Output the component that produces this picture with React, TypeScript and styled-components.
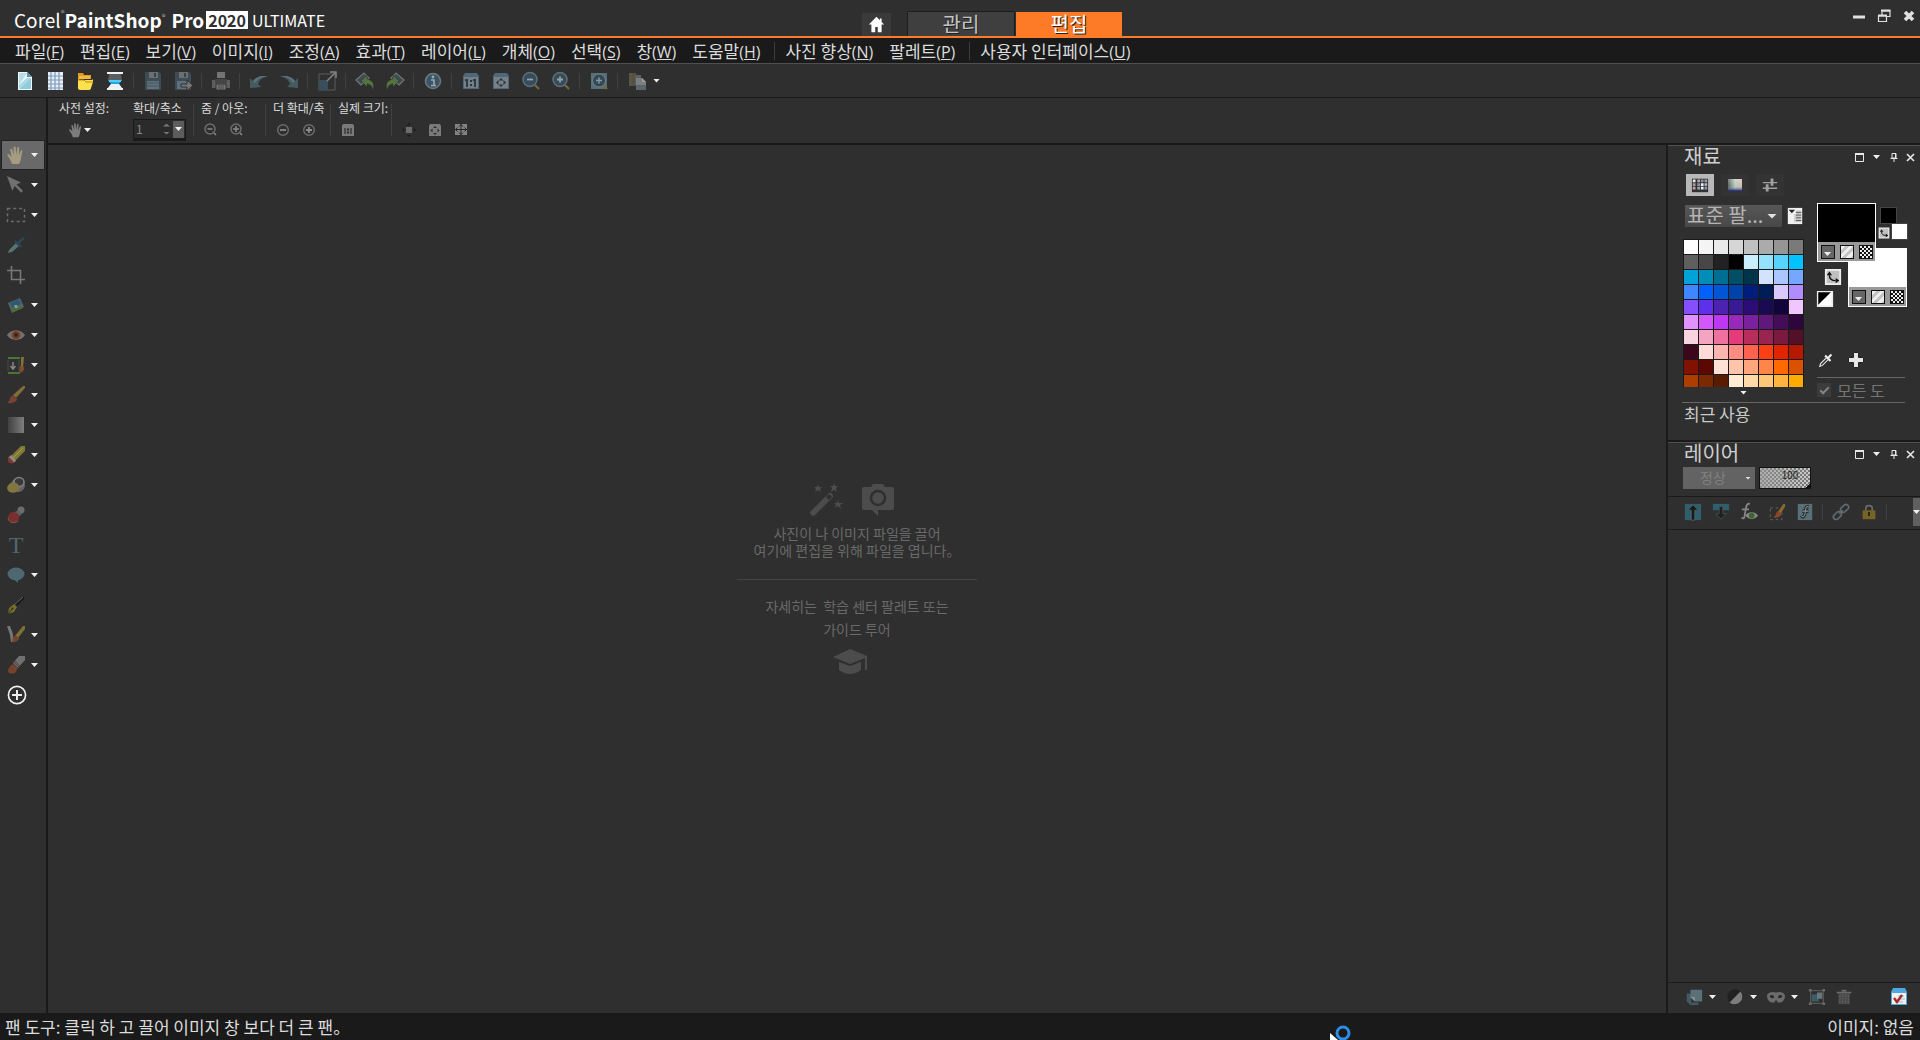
import React from "react";
import styled, { createGlobalStyle, css } from "styled-components";

const c = {
  bg: "#2f2f2f",
  dark: "#1a1a1a",
  edge: "#505050",
  orange: "#fd7a26",
  text: "#dcdcdc",
  dim: "#696969",
};

const ui = `"Noto Sans CJK KR", "Noto Sans", sans-serif`;

const GlobalStyle = createGlobalStyle`
  *, *::before, *::after { box-sizing: border-box; }
  body { margin: 0; background: ${c.bg}; color: ${c.text}; font: 17px/24px ${ui}; overflow: hidden; }
  button, input, select { font: inherit; color: inherit; margin: 0; padding: 0; border: 0; background: none; border-radius: 0; }
  h1, h2, p { margin: 0; font-weight: 400; }
`;

/* ---------- icons (20 x 20 grid) ---------- */

const icons: Record<string, React.ReactNode> = {
  newFile: (
    <>
      <path d="M3 1h9l5 5v13H3z" fill="#eef8fb" />
      <path d="M4 2h8l-8 12z" fill="#b5dfe9" />
      <path d="M4 18L16 7v11z" fill="#8fcbdc" />
      <path d="M4 14L12 7h4L4 18z" fill="#a8d8e4" />
      <path d="M12 1l5 5h-5z" fill="#5d93ad" />
    </>
  ),
  grid: (
    <>
      <path d="M3 1h15v18H3z" fill="#e9eef3" />
      <path d="M6 1v18M10 1v18M14 1v18M3 5h15M3 9h15M3 13h15M3 17h15" stroke="#7b9bbd" strokeWidth="1.2" />
    </>
  ),
  folder: (
    <>
      <path d="M3 2h5l1 2h7v4H3z" fill="#e39a21" />
      <path d="M3 8l2 1h12l1-1v3l-2 6c0 1-1 2-2 2H5c-1 0-2-1-2-2z" fill="#ffe14f" />
      <path d="M4 8V5h11v3" fill="#f5b83a" />
      <path d="M3 9h6l2 2h7" stroke="#b98a12" fill="none" />
    </>
  ),
  scanner: (
    <>
      <path d="M2 1h16v2H2zM2 17h16v2H2z" fill="#f2f2f2" />
      <path d="M4 3h12l1 7H3z" fill="#5b5e61" />
      <path d="M3 9h14l-3 4 3 4H3l3-4z" fill="#1fa5df" />
      <path d="M6 13h8l3 4H3z" fill="#e8f2f5" />
      <path d="M4 9h12v2H4z" fill="#58ccf5" />
    </>
  ),
  save: (
    <>
      <path d="M2 1h14l2 2v16H2z" fill="#42545f" />
      <path d="M6 1h9v6H6z" fill="#7b7f81" />
      <path d="M11 2h2v4h-2z" fill="#3a4a55" />
      <path d="M4 10h12v8H4z" fill="#6c8290" />
      <path d="M4 12h12M4 15h12" stroke="#4e6370" />
    </>
  ),
  saveAs: (
    <>
      <path d="M2 1h14l2 2v16H2z" fill="#42545f" />
      <path d="M6 1h9v6H6z" fill="#7b7f81" />
      <path d="M11 2h2v4h-2z" fill="#3a4a55" />
      <path d="M4 10h12v8H4z" fill="#6c8290" />
      <path d="M8 13h6v-4l6 5.500-6 5.500v-4H8z" fill="#8a8a8a" stroke="#2f2f2f" />
    </>
  ),
  print: (
    <>
      <path d="M6 1h8v6H6z" fill="#858585" />
      <path d="M1 9h18v8H1z" fill="#6a6a6a" />
      <path d="M4 8h12v4H4z" fill="#4b4b4b" />
      <path d="M5 13h10v6H5z" fill="#8a8a8a" stroke="#2f2f2f" />
      <path d="M7 15h6M7 17h6" stroke="#4b4b4b" />
    </>
  ),
  undo: (
    <>
      <path d="M1 17V7l3 3c4-5 10-6 15-4-5 0-8 2-10 7l3 3z" fill="#4a666c" />
      <path d="M4 10c4-5 10-6 15-4-6-1-10 1-13 6z" fill="#6b868c" />
    </>
  ),
  redo: (
    <>
      <path d="M19 17V7l-3 3C12 5 6 4 1 6c5 0 8 2 10 7l-3 3z" fill="#4a666c" />
      <path d="M16 10C12 5 6 4 1 6c6-1 10 1 13 6z" fill="#6b868c" />
    </>
  ),
  resize: (
    <>
      <path d="M2 3h16v16H2z" fill="none" stroke="#686868" />
      <path d="M2 9h9v10H2z" fill="#3b5766" />
      <path d="M10 10l8-8M13 1h6v6" stroke="#9a9a9a" strokeWidth="1.500" fill="none" />
    </>
  ),
  rotateLeft: (
    <>
      <path d="M1 9l8-7 5 5-8 7z" fill="#3d5260" stroke="#7f878b" strokeWidth="1.200" />
      <path d="M6 10l6-6v4c5 1 8 4 6 11-1-4-3-6-6-6v3z" fill="#5f8446" stroke="#2c3626" strokeWidth=".6" />
    </>
  ),
  rotateRight: (
    <>
      <path d="M19 9l-8-7-5 5 8 7z" fill="#3d5260" stroke="#7f878b" strokeWidth="1.200" />
      <path d="M14 10L8 4v4c-5 1-8 4-6 11 1-4 3-6 6-6v3z" fill="#5f8446" stroke="#2c3626" strokeWidth=".6" />
    </>
  ),
  info: (
    <>
      <circle cx="10" cy="10" r="7.500" fill="#3c5f74" stroke="#7a8c94" strokeWidth="1.600" />
      <circle cx="10" cy="6" r="1.400" fill="#b9c4c9" />
      <path d="M8 9h3v5M8 14.500h5" stroke="#b9c4c9" strokeWidth="1.600" fill="none" />
    </>
  ),
  actual: (
    <>
      <path d="M4 2h12l2 3v13H2V5z" fill="#56758c" />
      <path d="M3 6h14v11H3z" fill="#8a939b" />
      <path d="M6 8v8M14 8v8M4 9.500l2-1M12 9.500l2-1" stroke="#24384d" strokeWidth="1.800" />
      <path d="M9 9h2v2H9zM9 13h2v2H9z" fill="#24384d" />
    </>
  ),
  fit: (
    <>
      <path d="M4 2h12l2 3v13H2V5z" fill="#56758c" />
      <path d="M3 6h14v11H3z" fill="#8a959c" />
      <path d="M10 7l2.500 2.500h-5zM10 16l2.500-2.500h-5zM5 11.500L7.500 9v5zM15 11.500L12.500 9v5z" fill="#24384d" />
    </>
  ),
  zoomOut: (
    <>
      <circle cx="9" cy="8.500" r="7" fill="#385466" stroke="#67808c" strokeWidth="1.500" />
      <path d="M6 8.500h6" stroke="#b0bcc2" strokeWidth="1.800" />
      <path d="M14 14l4 4" stroke="#8b7643" strokeWidth="2.200" />
    </>
  ),
  zoomIn: (
    <>
      <circle cx="9" cy="8.500" r="7" fill="#385466" stroke="#67808c" strokeWidth="1.500" />
      <path d="M6 8.500h6M9 5.500v6" stroke="#b0bcc2" strokeWidth="1.800" />
      <path d="M14 14l4 4" stroke="#8b7643" strokeWidth="2.200" />
    </>
  ),
  zoomPage: (
    <>
      <path d="M2 2h16v16H2z" fill="#62808c" />
      <circle cx="10" cy="9.500" r="6.500" fill="#35505f" stroke="#84959c" />
      <path d="M7 9.500h6M10 6.500v6" stroke="#9fb0b8" strokeWidth="1.500" />
      <path d="M14 14l4 4" stroke="#8b7643" strokeWidth="2" />
    </>
  ),
  copy: (
    <>
      <path d="M2 2h7v13H2z" fill="#5c5a4a" />
      <path d="M2 2h3v13H2z" fill="#67604a" />
      <path d="M8 4h6v10H8z" fill="#6a6e70" />
      <path d="M9 7h6l4 4v8H9z" fill="#8c9496" />
      <path d="M9 14h10v5H9z" fill="#66757c" />
      <path d="M15 7l4 4h-4z" fill="#b6b6b6" />
    </>
  ),
  hand: (
    <path
      d="M6 19L4.500 15 1.500 10.500c-.7-1.400 1-2 1.800-1L5.500 12 4.300 5c-.2-1.500 1.500-1.800 1.900-.4L7.800 10 7.600 2.600c0-1.500 1.900-1.500 2 0L10.300 9.700l1-6.700c.3-1.400 2-1.100 1.900.3l-.4 7.200 1.700-4.600c.5-1.300 2-.8 1.700.6L15 13c-.2 2.500-.8 4-2 6z"
      fill="currentColor"
    />
  ),
  pointer: <path d="M1 1l14 6.500-4.500 2 6.500 6.300-1.800 1.900-6.500-6.600-2.400 4.700z" fill="#707070" />,
  marquee: <path d="M1.500 3.500h17v13h-17z" fill="none" stroke="#6c6c6c" strokeWidth="1.500" strokeDasharray="3 2.800" />,
  dropper: (
    <>
      <path d="M2 18l1-3 7-7 3 3-7 6z" fill="#587374" />
      <path d="M9 6l6 6M12 9l4-5" stroke="#2c4856" strokeWidth="2.400" />
      <path d="M16 3l2 1" stroke="#2c4856" strokeWidth="2.500" />
    </>
  ),
  crop: <path d="M5.500 1v13.500H19M1 5.500h13.500V19" fill="none" stroke="#787878" strokeWidth="1.600" />,
  straighten: (
    <>
      <path d="M2 8l12-5 4 9-12 6z" fill="#56666c" />
      <path d="M4 8l9-4 2 5-9 4z" fill="#2e5877" />
      <path d="M5 13l4-1 6-1 2 2-10 4z" fill="#4b6e35" />
      <path d="M8 10h3l1 3H9z" fill="#8d9696" />
    </>
  ),
  eye: (
    <>
      <path d="M1 10c4-6.500 14-6.500 18 0-4 6.500-14 6.500-18 0z" fill="#757170" />
      <circle cx="10" cy="10" r="4.400" fill="#77412d" />
      <circle cx="10" cy="10" r="2" fill="#3d211a" />
    </>
  ),
  clean: (
    <>
      <path d="M2 3h12M2 18h12" stroke="#487733" strokeWidth="2" />
      <path d="M13 5v11M2 5v11" stroke="#4a4a4a" />
      <path d="M7 7v6M4.500 11l2.500 3 2.500-3" stroke="#868686" strokeWidth="1.500" fill="none" />
      <path d="M15 2h3l-1 10h-2z" fill="#857232" />
      <path d="M14 11l4 1c1 3-2 6-5 6 1-2 0-5 1-7z" fill="#814c33" />
    </>
  ),
  brush: (
    <>
      <path d="M17 1h2v2l-9 10-3-3z" fill="#806c36" />
      <path d="M7 10l4 4c0 3-6 5-10 4 3-1 2-6 6-8z" fill="#774331" />
    </>
  ),
  gradient: (
    <>
      <defs>
        <linearGradient id="toolGradient">
          <stop offset="0" stopColor="#424242" />
          <stop offset="1" stopColor="#7d7d7d" />
        </linearGradient>
      </defs>
      <path d="M2 2h16v16H2z" fill="url(#toolGradient)" />
    </>
  ),
  eraser: (
    <>
      <path d="M15 1h4v5L9 16l-4-5z" fill="#817a36" />
      <path d="M17 3L7 13" stroke="#a39a4d" />
      <path d="M5 10l5 6-3 2-5-5z" fill="#8e8e8e" />
      <path d="M3 12l5 5c-2 3-7 1-6-3z" fill="#893434" />
    </>
  ),
  bucket: (
    <>
      <circle cx="12" cy="10" r="7" fill="#666" />
      <ellipse cx="13" cy="7" rx="5" ry="4.500" fill="#3a3a3a" stroke="#838383" strokeWidth="1.500" />
      <path d="M1 13c1-5 6-7 11-4l1 6c-3 4-11 4-12-2z" fill="#81763f" />
    </>
  ),
  clone: (
    <>
      <circle cx="15" cy="5" r="3.500" fill="#6d6d6d" />
      <path d="M12 5l4 4-6 5-4-5z" fill="#5e5e5e" />
      <circle cx="7.500" cy="12.500" r="5.500" fill="#792f2f" />
      <path d="M2 13c1 5 6 6 10 3" stroke="#8c5050" fill="none" />
    </>
  ),
  text: (
    <text x="10" y="18" textAnchor="middle" fill="#4f686b" fontFamily="Liberation Serif, serif" fontSize="24">
      T
    </text>
  ),
  speech: (
    <>
      <ellipse cx="10" cy="9" rx="8.500" ry="6.500" fill="#4c6870" />
      <path d="M8 14l4 4v-4z" fill="#4c6870" />
    </>
  ),
  pen: (
    <>
      <path d="M18 1v3l-7 7-3-2z" fill="#191919" />
      <path d="M17 2L8 10" stroke="#6b6b6b" />
      <path d="M8 9l3 3-3 5-6 2 1-6z" fill="#756f2a" />
      <path d="M2 19l4-5" stroke="#302e1a" />
      <circle cx="6.500" cy="13.500" r="1" fill="#302e1a" />
    </>
  ),
  warp: (
    <>
      <path d="M1 1h3l3 8v8H5l-1-7z" fill="#767676" />
      <path d="M17 1h2v3l-7 9-3-2z" fill="#806f35" />
      <path d="M8 11l5 1c1 3-3 6-7 5 1-2 0-4 2-6z" fill="#774331" />
    </>
  ),
  oil: (
    <>
      <path d="M13 1h6v4l-7 8-5-5z" fill="#707070" />
      <path d="M9 6l5 5M8 7l5 5" stroke="#474747" />
      <path d="M7 9l5 4-3 5c-3 1-7 1-7-2s2-5 5-7z" fill="#74422f" />
    </>
  ),
  addTool: (
    <>
      <circle cx="10" cy="10" r="7.800" fill="none" stroke="#f0f0f0" strokeWidth="1.500" />
      <path d="M10 5.500v9M5.500 10h9" stroke="#f0f0f0" strokeWidth="1.800" />
    </>
  ),
  minusLens: (
    <>
      <circle cx="9" cy="9" r="5" fill="none" stroke="#6d6d6d" strokeWidth="1.500" />
      <path d="M6.500 9h5M13 13l2 2" stroke="#8a8a8a" strokeWidth="1.500" />
    </>
  ),
  plusLens: (
    <>
      <circle cx="9" cy="9" r="5" fill="none" stroke="#6d6d6d" strokeWidth="1.500" />
      <path d="M6 9h6M9 6v6M13 13l2 2" stroke="#8a8a8a" strokeWidth="1.500" />
    </>
  ),
  minusCircle: (
    <>
      <circle cx="10" cy="10" r="5.300" fill="none" stroke="#6d6d6d" strokeWidth="1.400" />
      <path d="M7 10h6" stroke="#8a8a8a" strokeWidth="1.800" />
    </>
  ),
  plusCircle: (
    <>
      <circle cx="10" cy="10" r="5.300" fill="none" stroke="#6d6d6d" strokeWidth="1.400" />
      <path d="M7 10h6M10 7v6" stroke="#8a8a8a" strokeWidth="1.800" />
    </>
  ),
  oneToOne: (
    <>
      <path d="M5 4h10l1 2v10H4V6z" fill="#7a7a7a" />
      <path d="M7 8v6M13 8v6M9.500 9h1v1h-1zM9.500 12h1v1h-1z" stroke="#2c2c2c" strokeWidth="1.200" />
    </>
  ),
  moveView: (
    <>
      <path d="M7 7h6v6H7z" fill="#6c6c6c" />
      <path d="M10 3l2 2H8zM10 17l2-2H8zM3 10l2-2v4zM17 10l-2-2v4z" fill="#1a1a1a" />
    </>
  ),
  fitSmall: (
    <>
      <path d="M5 4h10l1 2v10H4V6z" fill="#7a7a7a" />
      <path d="M10 6l2 2H8zM10 15l2-2H8zM5.500 10.500l2-2v4zM14.500 10.500l-2-2v4z" fill="#2c2c2c" />
    </>
  ),
  fitScreen: (
    <>
      <path d="M4 4h12v11H4z" fill="#828282" />
      <path d="M10 4v11M4 9.500h12M8 6.500l2-2 2 2M8 12.500l2 2 2-2M6.500 7.500l-2 2 2 2M13.500 7.500l2 2-2 2" stroke="#242424" fill="none" />
    </>
  ),
  home: <path d="M10 1L1 10h3v9h4.500v-6h3v6H16v-9h3l-3-3V3h-2v2z" fill="#fff" />,
  swatchTab: (
    <>
      <path d="M1 3h18v15H1z" fill="#333" />
      <path d="M2 4h3v3H2zM11 8h3v3h-3zM11 12h3v3h-3z" fill="#eee" />
      <path d="M7 4h3v3H7zM2 12h3v3H2z" fill="#caa2a2" />
      <path d="M11 4h3v3h-3zM7 8h3v3H7zM15 12h3v3h-3z" fill="#8793b8" />
      <path d="M15 4h3v3h-3zM2 8h3v3H2zM7 12h3v3H7z" fill="#93a79b" />
      <path d="M15 8h3v3h-3z" fill="#b8b0c8" />
    </>
  ),
  rainbowTab: (
    <>
      <defs>
        <linearGradient id="hueAcross">
          <stop offset="0" stopColor="#2c2c2c" />
          <stop offset=".5" stopColor="#a9bfb0" />
          <stop offset="1" stopColor="#d8a79e" />
        </linearGradient>
        <linearGradient id="hueDown" x2="0" y2="1">
          <stop offset="0" stopColor="#fff" stopOpacity=".4" />
          <stop offset=".6" stopColor="#cfe8d4" stopOpacity=".3" />
          <stop offset="1" stopColor="#101c86" />
        </linearGradient>
      </defs>
      <path d="M3 4h14v12H3z" fill="url(#hueAcross)" />
      <path d="M3 4h14v12H3z" fill="url(#hueDown)" />
    </>
  ),
  sliderTab: (
    <>
      <path d="M1 7h18M1 14h18" stroke="#a0a0a0" strokeWidth="1.800" />
      <path d="M12.500 2v9M6.500 9v9" stroke="#a0a0a0" strokeWidth="3.500" />
    </>
  ),
  paletteMenu: (
    <>
      <path d="M2 1h16v18H2z" fill="#f0f0f0" />
      <path d="M3 3h7L6.500 7z" fill="#222" />
      <path d="M10 8v9" stroke="#aaa" />
      <path d="M11 4h6v13h-6z" fill="#c8c8c8" />
      <path d="M11 6h6M11 9h6M11 12h6M11 15h6" stroke="#555" />
    </>
  ),
  swap: (
    <>
      <path d="M2 2h16v16H2z" fill="#c0c0c0" stroke="#eee" strokeWidth="2" />
      <path d="M6 8c0 4 2 6 7 6" stroke="#111" strokeWidth="1.600" fill="none" />
      <path d="M6 4l3 4H3zM17 14l-4 3v-6z" fill="#111" />
    </>
  ),
  blackWhite: (
    <>
      <path d="M2 2h16v16H2z" fill="#fff" stroke="#eee" strokeWidth="2" />
      <path d="M2.500 2.500h14l-14 14z" fill="#000" />
    </>
  ),
  whiteDropper: (
    <>
      <path d="M3 17l1-3 7-7 2 2-7 7z" fill="#2a2a2a" stroke="#eee" strokeWidth="1.200" />
      <path d="M9 5l6 6M12 8l4-4" stroke="#eee" strokeWidth="2.400" />
    </>
  ),
  plus: <path d="M7.500 2.500h5v5h5v5h-5v5h-5v-5h-5v-5h5z" fill="#e6e6e6" stroke="#222" />,
  layerUp: (
    <>
      <path d="M1 1h18v18H1z" fill="#2f5f6c" />
      <path d="M10 2l6 6h-4v11H8V8H4z" fill="#191c1d" stroke="#5f696c" strokeWidth=".8" />
    </>
  ),
  layerDown: (
    <>
      <path d="M1 1h18v7H1z" fill="#2f5f6c" />
      <path d="M8 4h4v8h4l-6 6-6-6h4z" fill="#1d2021" stroke="#51585a" strokeWidth=".8" />
    </>
  ),
  effectEye: (
    <>
      <path d="M11 1C7 0 7 4 6 9l-1 6c0 2-2 3-3 1M2 7h8" stroke="#858585" strokeWidth="2" fill="none" />
      <path d="M6 14c3-5 11-5 14 0-3 5-11 5-14 0z" fill="#8a8a8a" />
      <circle cx="13" cy="14" r="3.200" fill="#3d662a" />
    </>
  ),
  maskBrush: (
    <>
      <path d="M2.500 5.500h13v13h-13z" fill="none" stroke="#686868" strokeDasharray="3 3" />
      <path d="M17 1h2v3l-5 8-3-2z" fill="#8a6a32" />
      <path d="M11 9l4 3c0 3-5 5-9 4 3-1 2-5 5-7z" fill="#8a452b" />
    </>
  ),
  style: (
    <>
      <path d="M2 1h16v18H2z" fill="#587077" />
      <path d="M14 4c-4-1-3 4-4 8s-3 4-4 2M7 9h7" stroke="#1c2224" strokeWidth="3.500" fill="none" />
      <path d="M14 4c-4-1-3 4-4 8s-3 4-4 2M7 9h7" stroke="#8a9496" strokeWidth="1.200" fill="none" />
    </>
  ),
  link: (
    <g fill="none" stroke="#5f6a6c" strokeWidth="1.800">
      <rect x="9" y="3" width="10" height="6" rx="3" transform="rotate(-42 14 6)" />
      <rect x="1" y="11" width="10" height="6" rx="3" transform="rotate(-42 6 14)" />
      <path d="M8 12l4-4" />
    </g>
  ),
  lock: (
    <>
      <path d="M6 9V5c0-4 8-4 8 0v4" fill="none" stroke="#6a6a6a" strokeWidth="2" />
      <path d="M2 8h16v11H2z" fill="#756423" />
      <path d="M9 10h2v5H9z" fill="#1d1a0e" />
    </>
  ),
  newLayer: (
    <>
      <path d="M2 6h5v10h8v3H6l-4-4z" fill="#3f5b65" />
      <path d="M6 2h13v13h-8l-5-5z" fill="#5a7076" />
      <path d="M6 10h5v5z" fill="#829296" />
    </>
  ),
  adjust: (
    <>
      <circle cx="10" cy="10" r="8.500" fill="#212121" />
      <path d="M16 4a8.500 8.500 0 0 1-12 12z" fill="#7d7d7d" />
    </>
  ),
  mask: (
    <>
      <path d="M0 8c2-4 6-4 10-3 4-1 8-1 10 3 0 6-4 9-8 8l-2-3-2 3c-4 1-8-2-8-8z" fill="#6c6c6c" />
      <path d="M3 9c2-2 4-1 5 1-1 2-4 2-5-1zM17 9c-2-2-4-1-5 1 1 2 4 2 5-1z" fill="#2a2a2a" />
    </>
  ),
  group: (
    <>
      <path d="M3 3h14v14H3z" fill="none" stroke="#666" />
      <path d="M4 7h8v8H4z" fill="#3f5b65" />
      <path d="M10 5h6v7h-6z" fill="#69777b" />
      <path d="M1 1h3v3H1zM16 1h3v3h-3zM1 16h3v3H1zM16 16h3v3h-3z" fill="#696969" />
    </>
  ),
  trash: (
    <>
      <path d="M3 6h14v13H3z" fill="#484848" />
      <path d="M1 4.500h18M7 2h6" stroke="#6a6a6a" strokeWidth="2" />
      <path d="M5 7v12M8.500 7v12M12 7v12M15.500 7v12" stroke="#6a6a6a" strokeDasharray="1 1" strokeWidth="1.600" />
    </>
  ),
  quickCheck: (
    <>
      <path d="M4 1h12l2 4v13H2V5z" fill="#4fa7e0" />
      <path d="M3 6h14v11H3z" fill="#f2f2f2" />
      <path d="M9 9h6M11 12h5M6 15h8" stroke="#9fb6c8" />
      <path d="M5 11l3 4 5-7" stroke="#a82828" strokeWidth="2.400" fill="none" />
    </>
  ),
};

const Svg = styled.svg<{ $size: number }>`
  display: block;
  flex: none;
  overflow: visible;
  width: ${(p) => p.$size}px;
  height: ${(p) => p.$size}px;
`;

const Icon = ({ name, size = 20 }: { name: string; size?: number }) => (
  <Svg $size={size} viewBox="0 0 20 20" aria-hidden="true">
    {icons[name]}
  </Svg>
);

const Caret = styled.span`
  flex: none;
  width: 7px;
  height: 4px;
  background: #f0f0f0;
  clip-path: polygon(0 0, 100% 0, 50% 100%);
`;

const dots = css`
  background-image: radial-gradient(circle, #6a6a6a 35%, transparent 40%);
  background-size: 2px 2px;
`;

/* ---------- frame ---------- */

const Window = styled.div`
  display: flex;
  flex-direction: column;
  height: 100vh;
`;

const TitleBar = styled.header`
  display: grid;
  grid-template-columns: 54fr auto 50fr;
  height: 38px;
  flex: none;
  border-bottom: 2px solid ${c.orange};
`;

const Brand = styled.h1`
  display: flex;
  align-items: center;
  padding: 4px 0 0 14px;
  font-size: 19px;
  line-height: 24px;
  color: #fff;
`;
const BrandBold = styled.span<{ $gap: number }>`
  font-weight: 700;
  margin-right: ${(p) => p.$gap}px;
`;
const Mark = styled.span`
  align-self: flex-start;
  padding-top: 5px;
  font-size: 8px;
  line-height: 8px;
  font-weight: 400;
  vertical-align: 8px;
  color: #aaa;
`;
const Year = styled.span`
  background: #fff;
  color: ${c.bg};
  font-size: 16px;
  line-height: 18px;
  font-weight: 700;
  padding: 0 2px;
  margin-right: 4px;
`;
const Edition = styled.span`
  font-size: 16px;
`;

const Tabs = styled.nav`
  display: flex;
  align-items: flex-end;
  gap: 2px;
`;
const HomeButton = styled.button`
  display: grid;
  place-items: center;
  width: 29px;
  height: 23px;
  margin-right: 15px;
  background: #3a3a3a;
`;
const Tab = styled.button<{ $active?: boolean }>`
  width: 106px;
  height: 24px;
  font-size: 20px;
  line-height: 24px;
  background: ${(p) => (p.$active ? c.orange : "#3f3f3f")};
  color: ${(p) => (p.$active ? "#fff" : "#c4c4c4")};
  text-shadow: 1px 1px 0 #222;
  box-shadow: ${(p) => (p.$active ? "none" : "0 -1px 0 #1c1c1c, 1px 0 0 #1c1c1c, -1px 0 0 #1c1c1c")};
`;

const WindowControls = styled.div`
  display: flex;
  justify-content: flex-end;
  align-items: flex-start;
  padding: 4px 4px 0 0;
  gap: 11px;
`;
const ControlButton = styled.button`
  display: block;
  width: 14px;
  height: 14px;
`;

const MenuBar = styled.nav`
  display: flex;
  align-items: center;
  height: 26px;
  flex: none;
  padding-left: 7px;
  background: ${c.dark};
  border-bottom: 1px solid ${c.edge};
`;
const MenuItem = styled.button`
  padding: 0 8px;
  white-space: nowrap;
`;
const Key = styled.span`
  font: 16px "Open Sans", sans-serif;
`;
const MenuRule = styled.span`
  width: 1px;
  height: 18px;
  background: #3c3c3c;
  margin: 0 2px 0 6px;
`;

const Toolbar = styled.div`
  display: flex;
  align-items: center;
  height: 34px;
  flex: none;
  padding-left: 6px;
  border-bottom: 1px solid ${c.dark};
`;
const Grip = styled.span`
  width: 4px;
  height: 20px;
  flex: none;
  ${dots}
`;
const ToolButton = styled.button<{ $dim?: boolean }>`
  display: grid;
  place-items: center;
  width: 30px;
  height: 30px;
  flex: none;
  opacity: ${(p) => (p.$dim ? 0.8 : 1)};
`;
const Rule = styled.span`
  width: 1px;
  height: 16px;
  margin: 0 4px 0 3px;
  flex: none;
  background: #404040;
`;

const Body = styled.div`
  display: flex;
  flex: 1;
  min-height: 0;
`;

const ToolColumn = styled.aside`
  display: flex;
  flex-direction: column;
  align-items: center;
  width: 48px;
  flex: none;
  padding-top: 34px;
  border-right: 2px solid ${c.dark};
`;
const ColumnGrip = styled.span`
  width: 20px;
  height: 4px;
  margin-bottom: 4px;
  flex: none;
  ${dots}
`;
const SideTool = styled.button<{ $active?: boolean }>`
  display: flex;
  align-items: center;
  gap: 5px;
  width: 42px;
  height: 28px;
  margin: 1px 0;
  padding-left: 4px;
  flex: none;
  color: #a59c82;
  ${(p) => p.$active && "background: #696969; box-shadow: 0 0 0 1px #222;"}
`;

const Workspace = styled.div`
  display: flex;
  flex-direction: column;
  flex: 1;
  min-width: 0;
`;
const OptionsBar = styled.div`
  display: flex;
  height: 47px;
  flex: none;
  border-bottom: 2px solid ${c.dark};
`;
const Group = styled.div<{ $width: number; $rule?: boolean }>`
  display: flex;
  width: ${(p) => p.$width}px;
  flex: none;
  padding: 2px 0 0 ${(p) => (p.$rule ? 8 : 2)}px;
  gap: 5px;
  background: ${(p) => (p.$rule ? "linear-gradient(#404040, #404040) 0 6px / 1px 32px no-repeat" : "none")};
`;
const GroupGrip = styled(Grip)`
  margin-top: 11px;
`;
const GroupBody = styled.div`
  display: flex;
  flex-direction: column;
  min-width: 0;
`;
const GroupLabel = styled.label`
  height: 18px;
  font-size: 12px;
  line-height: 15px;
  white-space: nowrap;
`;
const GroupRow = styled.div`
  display: flex;
  align-items: center;
  height: 24px;
`;
const SmallTool = styled.button`
  display: flex;
  align-items: center;
  width: 26px;
  height: 24px;
  color: #7d7d7d;
`;
const PresetTool = styled(SmallTool)`
  width: 40px;
  padding-left: 9px;
`;
const Spinner = styled.div`
  display: flex;
  align-items: center;
  width: 53px;
  height: 22px;
  padding: 1px;
  background: #2b2b2b;
  border: 1px solid ${c.dark};
  border-bottom-width: 3px;
`;
const SpinnerInput = styled.input`
  flex: 1;
  min-width: 0;
  padding-left: 1px;
  font-size: 12px;
  line-height: 16px;
  color: #8a8a8a;
`;
const Steps = styled.button`
  display: grid;
  gap: 5px;
  width: 10px;
`;
const StepMark = styled.span<{ $up?: boolean }>`
  width: 7px;
  height: 3px;
  background: #777;
  clip-path: ${(p) => (p.$up ? "polygon(50% 0, 100% 100%, 0 100%)" : "polygon(0 0, 100% 0, 50% 100%)")};
`;
const SpinnerDrop = styled.button`
  display: grid;
  place-items: center;
  width: 11px;
  height: 17px;
  background: #5c5c5c;
`;

const Canvas = styled.main`
  display: flex;
  flex-direction: column;
  align-items: center;
  justify-content: center;
  flex: 1;
`;
const Hero = styled.div`
  display: flex;
  gap: 18px;
  padding-right: 10px;
`;
const Hint = styled.p<{ $spaced?: boolean }>`
  font-size: 14px;
  line-height: ${(p) => (p.$spaced ? 23 : 17)}px;
  text-align: center;
  white-space: pre;
  color: ${c.dim};
`;
const HintRule = styled.hr`
  width: 240px;
  height: 1px;
  margin: 20px 0 15px;
  border: 0;
  background: #444;
`;
const HintTop = styled(Hint)`
  margin-top: 8px;
`;
const CapRow = styled(Hero)`
  margin-top: 8px;
  padding-right: 14px;
`;

const Main = styled.div`
  display: flex;
  flex: 1;
  min-height: 0;
`;

/* ---------- right dock ---------- */

const Dock = styled.aside`
  display: flex;
  flex-direction: column;
  width: 254px;
  flex: none;
  border-left: 2px solid ${c.dark};
`;
const Panel = styled.section<{ $grow?: boolean }>`
  display: flex;
  flex-direction: column;
  border-top: 1px solid ${c.edge};
  ${(p) => (p.$grow ? "flex: 1; min-height: 0;" : `height: 297px; flex: none; border-bottom: 2px solid ${c.dark};`)}
`;
const PanelHead = styled.div`
  display: flex;
  align-items: center;
  height: 22px;
  flex: none;
  padding: 0 5px 0 6px;
`;
const PanelTitle = styled.h2`
  flex: 1;
  padding: 0 0 3px 6px;
  font-size: 20px;
  line-height: 19px;
  color: #d0d0d0;
`;
const HeadIcons = styled.div`
  display: flex;
  align-items: center;
  gap: 8px;
`;
const HeadButton = styled.button`
  display: grid;
  place-items: center;
  min-width: 9px;
  height: 12px;
`;

const TabRow = styled.div`
  display: flex;
  gap: 7px;
  padding: 6px 0 0 18px;
`;
const MaterialTab = styled.button<{ $active?: boolean }>`
  display: grid;
  place-items: center;
  width: 28px;
  height: 22px;
  background: ${(p) => (p.$active ? "#b8b8b8" : "#333")};
`;
const Materials = styled.div`
  display: grid;
  grid-template-columns: 121px 1fr;
  column-gap: 13px;
  padding: 7px 15px 0 15px;
`;
const PaletteColumn = styled.div`
  display: flex;
  flex-direction: column;
`;
const PickRow = styled.div`
  display: flex;
  align-items: center;
  gap: 4px;
  padding: 2px 0 0 2px;
`;
const SelectWrap = styled.span<{ $width: number }>`
  display: grid;
  align-items: center;
  width: ${(p) => p.$width}px;
  & > * {
    grid-area: 1 / 1;
  }
`;
const PaletteSelect = styled.select`
  appearance: none;
  width: 100%;
  height: 22px;
  padding: 0 16px 2px 2px;
  font-size: 20px;
  line-height: 20px;
  background: linear-gradient(#575757, #484848);
  color: #b4b4b4;
`;
const SelectMark = styled.span<{ $big?: boolean }>`
  justify-self: end;
  width: ${(p) => (p.$big ? 10 : 6)}px;
  height: ${(p) => (p.$big ? 5 : 3)}px;
  margin-right: ${(p) => (p.$big ? 5 : 4)}px;
  background: #e0e0e0;
  clip-path: polygon(0 0, 100% 0, 50% 100%);
  pointer-events: none;
`;
const PlainButton = styled.button`
  display: block;
  flex: none;
`;
const Swatches = styled.div`
  display: grid;
  grid-template-columns: repeat(8, 14px);
  grid-auto-rows: 14px;
  gap: 1px;
  width: 121px;
  height: 148px;
  overflow: hidden;
  margin-top: 12px;
  padding: 1px;
  background: ${c.dark};
`;
const Swatch = styled.button<{ $color: string }>`
  background: ${(p) => p.$color};
`;
const MoreColors = styled.button`
  display: grid;
  place-items: center;
  height: 11px;
`;

const ColorColumn = styled.div`
  display: flex;
  flex-direction: column;
`;
const ColorStack = styled.div`
  position: relative;
  height: 104px;
`;
const ColorBox = styled.div<{ $x: number; $y: number }>`
  position: absolute;
  left: ${(p) => p.$x}px;
  top: ${(p) => p.$y}px;
  display: flex;
  flex-direction: column;
  width: 59px;
  height: 59px;
  border: 1px solid #fff;
  background: #999;
`;
const ColorFill = styled.button<{ $color: string }>`
  flex: 1;
  background: ${(p) => p.$color};
`;
const StyleRow = styled.div`
  display: flex;
  justify-content: space-around;
  align-items: center;
  height: 19px;
`;
const StyleButton = styled.button<{ $kind: "solid" | "blend" | "clear" }>`
  display: grid;
  place-items: center;
  width: 14px;
  height: 14px;
  padding-top: 5px;
  border: 1px solid #111;
  background: ${(p) =>
    p.$kind === "solid"
      ? "#666"
      : p.$kind === "blend"
        ? "repeating-linear-gradient(135deg, #eee 0 3px, #c4c4c4 3px 6px)"
        : "repeating-conic-gradient(#111 0 25%, #eee 0 50%) 0 0 / 4px 4px"};
`;
const Chip = styled.button<{ $x: number; $y: number; $color: string }>`
  position: absolute;
  left: ${(p) => p.$x}px;
  top: ${(p) => p.$y}px;
  width: 17px;
  height: 17px;
  border: 1px solid #444;
  background: ${(p) => p.$color};
`;
const Spot = styled.button<{ $x: number; $y: number }>`
  position: absolute;
  left: ${(p) => p.$x}px;
  top: ${(p) => p.$y}px;
`;
const PickerRow = styled.div`
  display: flex;
  gap: 11px;
  padding: 43px 0 7px;
`;
const AllTools = styled.label`
  display: flex;
  align-items: center;
  gap: 6px;
  height: 25px;
  border-top: 1px solid #666;
  white-space: nowrap;
  font-size: 16px;
  color: #757575;
`;
const Check = styled.input`
  appearance: none;
  display: grid;
  place-items: center;
  width: 14px;
  height: 14px;
  flex: none;
  background: #3c3c3c;
  &::after {
    content: "";
    width: 9px;
    height: 5px;
    border: solid #858585;
    border-width: 0 0 2px 2px;
    transform: translateY(-1px) rotate(-45deg);
  }
`;
const Recent = styled.p`
  margin: 0 15px 0 14px;
  padding-left: 2px;
  line-height: 21px;
  border-top: 1px solid #666;
  color: #cacaca;
`;

const BlendRow = styled.div`
  display: flex;
  align-items: center;
  gap: 4px;
  padding: 2px 0 7px 15px;
  border-bottom: 1px solid ${c.dark};
`;
const BlendSelect = styled.select`
  appearance: none;
  width: 100%;
  height: 22px;
  padding: 0 0 2px 17px;
  font-size: 14px;
  line-height: 20px;
  background: #636363;
  color: #808080;
`;
const Opacity = styled.input`
  width: 52px;
  height: 22px;
  padding: 0 4px 6px;
  font-size: 10px;
  text-align: center;
  text-indent: 10px;
  color: #222;
  border: 1px solid #111;
  background:
    linear-gradient(135deg, transparent 93%, #111 93%),
    linear-gradient(90deg, #9999, transparent),
    repeating-conic-gradient(#777 0 25%, #c8c8c8 0 50%) 0 0 / 4px 4px;
`;
const LayerTools = styled.div`
  display: flex;
  align-items: center;
  height: 33px;
  flex: none;
  padding: 0 0 2px 11px;
  border-bottom: 1px solid ${c.dark};
`;
const LayerTool = styled.button`
  display: grid;
  place-items: center;
  width: 28px;
  height: 30px;
  flex: none;
`;
const LayerEnd = styled.button`
  display: grid;
  place-items: center;
  width: 7px;
  height: 28px;
  margin-left: auto;
  background: #606060;
`;
const LayerList = styled.div`
  flex: 1;
`;
const LayerFooter = styled.div`
  display: flex;
  align-items: center;
  height: 31px;
  flex: none;
  padding: 0 11px 2px 17px;
  border-top: 1px solid ${c.dark};
`;
const FooterTool = styled.button<{ $wide?: boolean }>`
  display: flex;
  align-items: center;
  gap: 6px;
  width: ${(p) => (p.$wide ? 41 : 28)}px;
`;
const FooterEnd = styled(PlainButton)`
  margin-left: auto;
`;

const StatusBar = styled.footer`
  display: flex;
  justify-content: space-between;
  align-items: center;
  position: relative;
  height: 27px;
  flex: none;
  padding: 0 6px 0 5px;
  background: ${c.dark};
`;
const BusyPointer = styled.svg`
  position: absolute;
  left: 1328px;
  top: 11px;
  width: 26px;
  height: 16px;
`;

/* ---------- data ---------- */

const menus: (string | null)[][] = [
  ["파일", "F"], ["편집", "E"], ["보기", "V"], ["이미지", "I"], ["조정", "A"], ["효과", "T"],
  ["레이어", "L"], ["개체", "O"], ["선택", "S"], ["창", "W"], ["도움말", "H"], [null],
  ["사진 향상", "N"], ["팔레트", "P"], [null], ["사용자 인터페이스", "U"],
];

const toolbar = [
  ["newFile", "grid", "folder", "scanner"],
  ["save", "saveAs"],
  ["print"],
  ["undo", "redo"],
  ["resize"],
  ["rotateLeft", "rotateRight"],
  ["info"],
  ["actual", "fit", "zoomOut", "zoomIn"],
  ["zoomPage"],
  ["copy"],
];

const sideTools: [string, boolean][] = [
  ["hand", true], ["pointer", true], ["marquee", true], ["dropper", false], ["crop", false],
  ["straighten", true], ["eye", true], ["clean", true], ["brush", true], ["gradient", true],
  ["eraser", true], ["bucket", true], ["clone", false], ["text", false], ["speech", true],
  ["pen", false], ["warp", true], ["oil", true],
];

const palette = `
ffffff f4f4f4 eaeaea d6d6d6 c0c0c0 ababab 959595 7a7a7a
5f5f5f 474747 222222 000000 c9effe 94e2fe 57d4fe 00c3ff
00a3d9 008eb8 006e92 004f66 00344a d3e3fe aac8ff 75a7ff
3e87ff 0061fd 0056d6 0042a9 011d7c 001d57 d9c9fe b18cfe
864ffd 5e30eb 4d22b2 371a94 2c0d76 1a0a52 11053b efc6fe
e292fe d357fe be38f3 9929bd 7b219f 61187c 450d59 2e063d
f9d3e0 f4a4c0 ee719e e63b7a b92d5d 99244f 791a3e 551029
3c071b ffdbd8 ffb5af ff8c82 ff6250 ff4015 e32400 b51a00
831100 5c0700 ffe2d6 ffc5ab ffa57d ff8648 ff6a00 da5100
ad3e00 7b2900 5a1c00 ffecd4 ffd9a8 ffc777 feb43f ffab01`
  .trim()
  .split(/\s+/)
  .map((hex) => `#${hex}`);

/* ---------- pieces ---------- */

const PanelHeader = ({ title }: { title: string }) => (
  <PanelHead>
    <Grip />
    <PanelTitle>{title}</PanelTitle>
    <HeadIcons>
      <HeadButton aria-label="maximize">
        <svg width="9" height="9">
          <path d="M.5 1h8v7.500h-8z" fill="none" stroke="#e8e8e8" />
          <path d="M0 1h9" stroke="#e8e8e8" strokeWidth="2" />
        </svg>
      </HeadButton>
      <HeadButton aria-label="menu"><Caret /></HeadButton>
      <HeadButton aria-label="pin">
        <svg width="8" height="9">
          <path d="M2 .5h4V5H2zM.5 5.500h7M4 6v3M5.500 0v5" fill="none" stroke="#e8e8e8" />
        </svg>
      </HeadButton>
      <HeadButton aria-label="close">
        <svg width="9" height="9">
          <path d="M1 1l7 7M8 1L1 8" stroke="#e8e8e8" strokeWidth="1.600" />
        </svg>
      </HeadButton>
    </HeadIcons>
  </PanelHead>
);

const ColorTile = ({ x, y, color }: { x: number; y: number; color: string }) => (
  <ColorBox $x={x} $y={y}>
    <ColorFill $color={color} aria-label="color" />
    <StyleRow>
      <StyleButton $kind="solid" aria-label="style"><Caret /></StyleButton>
      <StyleButton $kind="blend" aria-label="texture" />
      <StyleButton $kind="clear" aria-label="transparent" />
    </StyleRow>
  </ColorBox>
);

export default function App() {
  return (
    <Window>
      <GlobalStyle />
      <TitleBar>
        <Brand>
          Corel<Mark>®</Mark>
          <BrandBold $gap={6}>PaintShop<Mark>®</Mark></BrandBold>
          <BrandBold $gap={2}>Pro</BrandBold>
          <Year>2020</Year>
          <Edition>ULTIMATE</Edition>
        </Brand>
        <Tabs>
          <HomeButton aria-label="home"><Icon name="home" size={17} /></HomeButton>
          <Tab>관리</Tab>
          <Tab $active>편집</Tab>
        </Tabs>
        <WindowControls>
          <ControlButton aria-label="minimize">
            <svg width="14" height="14"><path d="M1 8h12" stroke="#e0e0e0" strokeWidth="3" /></svg>
          </ControlButton>
          <ControlButton aria-label="restore">
            <svg width="14" height="14">
              <path d="M5 6V2h8v5.500h-3M1.500 7h8v5.500h-8z" fill="none" stroke="#e0e0e0" strokeWidth="1.200" />
              <path d="M4 1.500h9.500M1 6.500h9" stroke="#e0e0e0" strokeWidth="2" />
            </svg>
          </ControlButton>
          <ControlButton aria-label="close">
            <svg width="14" height="14"><path d="M3 3l8 8M11 3l-8 8" stroke="#e0e0e0" strokeWidth="3.600" /></svg>
          </ControlButton>
        </WindowControls>
      </TitleBar>

      <MenuBar>
        {menus.map(([label, key], i) =>
          label ? (
            <MenuItem key={i}>
              {label}
              <Key>(<u>{key}</u>)</Key>
            </MenuItem>
          ) : (
            <MenuRule key={i} />
          ),
        )}
      </MenuBar>

      <Toolbar>
        <Grip />
        {toolbar.map((group, i) => (
          <React.Fragment key={i}>
            {i > 0 && <Rule />}
            {group.map((name) => (
              <ToolButton key={name} $dim={i > 0} aria-label={name}><Icon name={name} /></ToolButton>
            ))}
          </React.Fragment>
        ))}
        <HeadButton aria-label="more"><Caret /></HeadButton>
      </Toolbar>

      <Body>
        <ToolColumn>
          <ColumnGrip />
          {sideTools.map(([name, more], i) => (
            <SideTool key={name} $active={i === 0} aria-label={name}>
              <Icon name={name} />
              {more && <Caret />}
            </SideTool>
          ))}
          <SideTool aria-label="add"><Icon name="addTool" size={22} /></SideTool>
        </ToolColumn>

        <Workspace>
          <OptionsBar>
            <Group $width={74}>
              <GroupGrip />
              <GroupBody>
                <GroupLabel>사전 설정:</GroupLabel>
                <GroupRow>
                  <PresetTool aria-label="preset"><Icon name="hand" size={16} /><Caret /></PresetTool>
                </GroupRow>
              </GroupBody>
            </Group>
            <Group $width={71}>
              <GroupGrip />
              <GroupBody>
                <GroupLabel htmlFor="zoom">확대/축소</GroupLabel>
                <GroupRow>
                  <Spinner>
                    <SpinnerInput id="zoom" defaultValue="1" />
                    <Steps aria-label="step"><StepMark $up /><StepMark /></Steps>
                    <SpinnerDrop aria-label="open"><Caret /></SpinnerDrop>
                  </Spinner>
                </GroupRow>
              </GroupBody>
            </Group>
            <Group $width={72} $rule>
              <GroupBody>
                <GroupLabel>줌 / 아웃:</GroupLabel>
                <GroupRow>
                  <SmallTool aria-label="zoom out"><Icon name="minusLens" /></SmallTool>
                  <SmallTool aria-label="zoom in"><Icon name="plusLens" /></SmallTool>
                </GroupRow>
              </GroupBody>
            </Group>
            <Group $width={65} $rule>
              <GroupBody>
                <GroupLabel>더 확대/축</GroupLabel>
                <GroupRow>
                  <SmallTool aria-label="zoom out more"><Icon name="minusCircle" /></SmallTool>
                  <SmallTool aria-label="zoom in more"><Icon name="plusCircle" /></SmallTool>
                </GroupRow>
              </GroupBody>
            </Group>
            <Group $width={61} $rule>
              <GroupBody>
                <GroupLabel>실제 크기:</GroupLabel>
                <GroupRow>
                  <SmallTool aria-label="actual size"><Icon name="oneToOne" /></SmallTool>
                </GroupRow>
              </GroupBody>
            </Group>
            <Group $width={100} $rule>
              <GroupBody>
                <GroupLabel />
                <GroupRow>
                  <SmallTool aria-label="center"><Icon name="moveView" /></SmallTool>
                  <SmallTool aria-label="fit window"><Icon name="fitSmall" /></SmallTool>
                  <SmallTool aria-label="fit screen"><Icon name="fitScreen" /></SmallTool>
                </GroupRow>
              </GroupBody>
            </Group>
          </OptionsBar>

          <Main>
            <Canvas>
              <Hero>
                <svg width="34" height="34" viewBox="0 0 34 34" fill="#4c4c4c">
                  <path d="M1 29L20 10c2-1 5 2 4 4L5 33c-2 0-4-2-4-4z" />
                  <path d="M20 11l3 3-3 3-3-3z" fill="#2f2f2f" />
                  <path d="M9 1l1 3h3l-2 2 1 3-3-2-3 2 1-3-2-2h3zM25 0l1 3h3l-2 2 1 4-3-2-3 2 1-4-2-2h3zM29 17l1 3h4l-3 2 1 4-3-3-3 2 1-3-2-2h3z" />
                </svg>
                <svg width="34" height="34" viewBox="0 0 34 34" fill="#4c4c4c">
                  <path d="M10 4l2-3h10l2 3h7q2 0 2 2v19q0 2-2 2H17v6l-6-6H3q-2 0-2-2V6q0-2 2-2z" />
                  <circle cx="17" cy="15" r="7" stroke="#2f2f2f" strokeWidth="2.500" />
                </svg>
              </Hero>
              <HintTop>{"사진이 나 이미지 파일을 끌어\n여기에 편집을 위해 파일을 엽니다。"}</HintTop>
              <HintRule />
              <Hint $spaced>{"자세히는  학습 센터 팔레트 또는\n가이드 투어"}</Hint>
              <CapRow>
                <svg width="34" height="26" viewBox="0 0 34 26" fill="#4c4c4c">
                  <path d="M0 8l17-8 17 7v14h-2V9l-15 6z" />
                  <path d="M6 13l11 4 11-4v8q-11 8-22 0z" />
                </svg>
              </CapRow>
            </Canvas>

            <Dock>
              <Panel>
                <PanelHeader title="재료" />
                <TabRow>
                  <MaterialTab $active aria-label="swatches"><Icon name="swatchTab" size={18} /></MaterialTab>
                  <MaterialTab aria-label="rainbow"><Icon name="rainbowTab" /></MaterialTab>
                  <MaterialTab aria-label="sliders"><Icon name="sliderTab" size={16} /></MaterialTab>
                </TabRow>
                <Materials>
                  <PaletteColumn>
                    <PickRow>
                      <SelectWrap $width={100}>
                        <PaletteSelect aria-label="palette"><option>표준 팔...</option></PaletteSelect>
                        <SelectMark $big />
                      </SelectWrap>
                      <PlainButton aria-label="palette menu"><Icon name="paletteMenu" size={18} /></PlainButton>
                    </PickRow>
                    <Swatches>
                      {palette.map((color) => (
                        <Swatch key={color} $color={color} aria-label={color} />
                      ))}
                    </Swatches>
                    <MoreColors aria-label="more colors"><Caret /></MoreColors>
                  </PaletteColumn>
                  <ColorColumn>
                    <ColorStack>
                      <ColorTile x={31} y={45} color="#fff" />
                      <ColorTile x={0} y={0} color="#000" />
                      <Chip $x={74} $y={20} $color="#fff" aria-label="white" />
                      <Chip $x={63} $y={4} $color="#000" aria-label="black" />
                      <Spot $x={61} $y={24} aria-label="swap colors"><Icon name="swap" size={12} /></Spot>
                      <Spot $x={7} $y={65} aria-label="swap materials"><Icon name="swap" size={18} /></Spot>
                      <Spot $x={-1} $y={87} aria-label="black and white"><Icon name="blackWhite" size={18} /></Spot>
                    </ColorStack>
                    <PickerRow>
                      <PlainButton aria-label="pick"><Icon name="whiteDropper" size={18} /></PlainButton>
                      <PlainButton aria-label="add swatch"><Icon name="plus" /></PlainButton>
                    </PickerRow>
                    <AllTools>
                      <Check type="checkbox" defaultChecked />
                      모든 도
                    </AllTools>
                  </ColorColumn>
                </Materials>
                <Recent>최근 사용</Recent>
              </Panel>

              <Panel $grow>
                <PanelHeader title="레이어" />
                <BlendRow>
                  <SelectWrap $width={72}>
                    <BlendSelect aria-label="blend mode"><option>정상</option></BlendSelect>
                    <SelectMark />
                  </SelectWrap>
                  <Opacity aria-label="opacity" defaultValue="100" />
                </BlendRow>
                <LayerTools>
                  {["layerUp", "layerDown", "effectEye", "maskBrush", "style"].map((name) => (
                    <LayerTool key={name} aria-label={name}><Icon name={name} size={18} /></LayerTool>
                  ))}
                  <Rule />
                  <LayerTool aria-label="link"><Icon name="link" size={18} /></LayerTool>
                  <LayerTool aria-label="lock"><Icon name="lock" size={16} /></LayerTool>
                  <Rule />
                  <LayerEnd aria-label="more"><Caret /></LayerEnd>
                </LayerTools>
                <LayerList />
                <LayerFooter>
                  <FooterTool $wide aria-label="new layer"><Icon name="newLayer" size={18} /><Caret /></FooterTool>
                  <FooterTool $wide aria-label="adjustment"><Icon name="adjust" size={18} /><Caret /></FooterTool>
                  <FooterTool $wide aria-label="mask"><Icon name="mask" size={18} /><Caret /></FooterTool>
                  <FooterTool aria-label="group"><Icon name="group" size={18} /></FooterTool>
                  <FooterTool aria-label="delete"><Icon name="trash" size={16} /></FooterTool>
                  <FooterEnd aria-label="quick menu"><Icon name="quickCheck" /></FooterEnd>
                </LayerFooter>
              </Panel>
            </Dock>
          </Main>
        </Workspace>
      </Body>

      <StatusBar>
        <span>팬 도구: 클릭 하 고 끌어 이미지 창 보다 더 큰 팬。</span>
        <span>이미지: 없음</span>
        <BusyPointer viewBox="0 0 26 16" aria-hidden="true">
          <path d="M2 9v7h8z" fill="#fff" />
          <circle cx="15" cy="9" r="6" fill="none" stroke="#2e8be6" strokeWidth="3" />
        </BusyPointer>
      </StatusBar>
    </Window>
  );
}
